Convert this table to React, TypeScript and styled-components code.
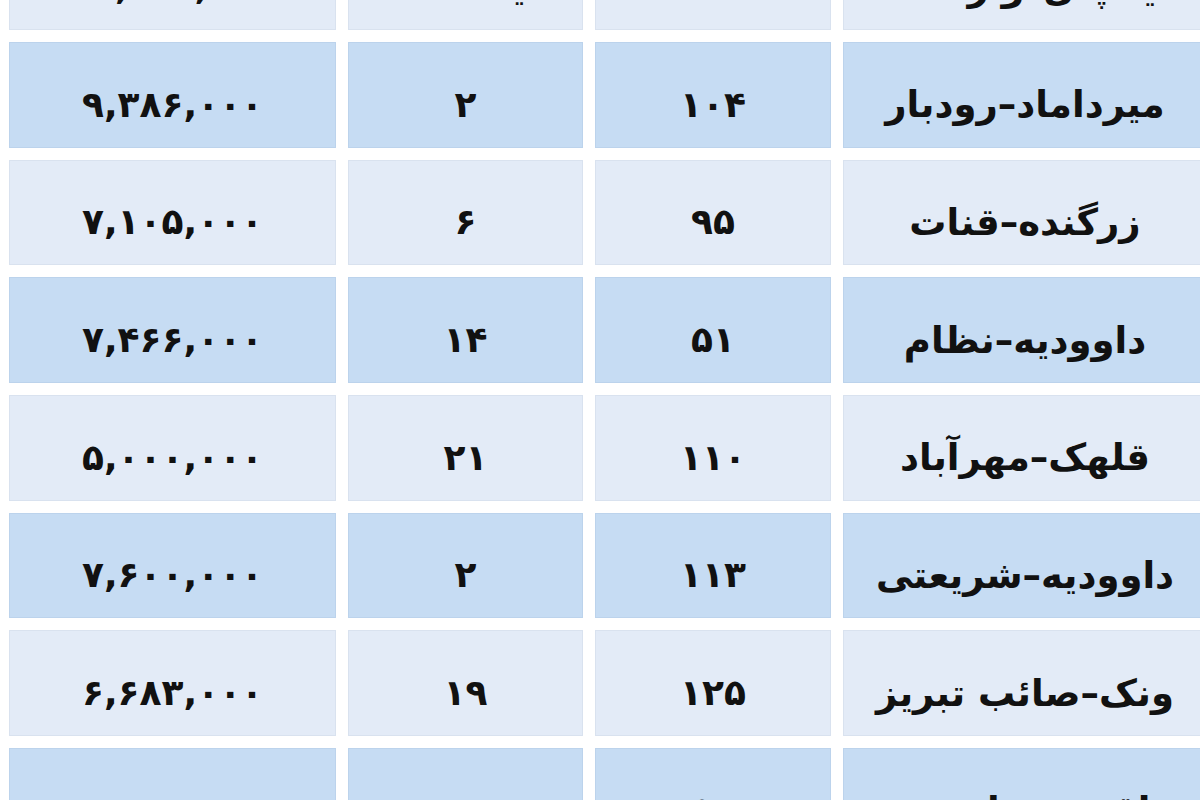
import React from "react";
import styled, { createGlobalStyle } from "styled-components";

const Global = createGlobalStyle`
  html, body {
    margin: 0;
    padding: 0;
    background: #ffffff;
    overflow: hidden;
    width: 1200px;
    height: 800px;
  }
  #root {
    width: 1200px;
    height: 800px;
    overflow: hidden;
  }
`;

const Viewport = styled.div`
  width: 1200px;
  height: 800px;
  overflow: hidden;
  background: #ffffff;
`;

const Table = styled.div`
  direction: rtl;
  display: grid;
  grid-template-columns: 364px 236px 235px 327px;
  grid-auto-rows: 105.67px;
  column-gap: 12px;
  row-gap: 12px;
  width: 1198px;
  margin-left: 9px;
  margin-top: -75.67px;
  font-family: "DejaVu Sans", "Noto Sans", sans-serif;
`;

const Cell = styled.div<{ $dark: boolean; $wide?: boolean }>`
  display: flex;
  align-items: center;
  justify-content: center;
  box-sizing: border-box;
  padding-top: 20px;
  background: ${(p) => (p.$dark ? "#c6dcf3" : "#e3ebf7")};
  border: 1px solid ${(p) => (p.$dark ? "#bcd3ec" : "#d9e2ef")};
  color: #111111;
  font-size: ${(p) => (p.$wide ? "37px" : "36px")};
  font-weight: 700;
  white-space: nowrap;
  line-height: 1;
`;

const Num = styled.span`
  direction: ltr;
  unicode-bidi: isolate;
  letter-spacing: 0.5px;
`;

type Row = [string, string, string, string];

const rows: Row[] = [
  ["یخچال–وارسته", "۱۲۷", "یکساله", "۱۰,۸۷۹,۰۰۰"],
  ["میرداماد–رودبار", "۱۰۴", "۲", "۹,۳۸۶,۰۰۰"],
  ["زرگنده–قنات", "۹۵", "۶", "۷,۱۰۵,۰۰۰"],
  ["داوودیه–نظام", "۵۱", "۱۴", "۷,۴۶۶,۰۰۰"],
  ["قلهک–مهرآباد", "۱۱۰", "۲۱", "۵,۰۰۰,۰۰۰"],
  ["داوودیه–شریعتی", "۱۱۳", "۲", "۷,۶۰۰,۰۰۰"],
  ["ونک–صائب تبریز", "۱۲۵", "۱۹", "۶,۶۸۳,۰۰۰"],
  ["اقدسیه–ارتش", "۵۳", "۱۰", "۸,۶۱۶,۰۰۰"],
];

export default function App() {
  return (
    <Viewport>
      <Global />
      <Table>
        {rows.map((r, i) => {
          const dark = i % 2 === 1;
          return (
            <React.Fragment key={i}>
              <Cell $dark={dark} $wide>{r[0]}</Cell>
              <Cell $dark={dark}><Num>{r[1]}</Num></Cell>
              <Cell $dark={dark}>{/^[۰-۹]+$/.test(r[2]) ? <Num>{r[2]}</Num> : r[2]}</Cell>
              <Cell $dark={dark}><Num>{r[3]}</Num></Cell>
            </React.Fragment>
          );
        })}
      </Table>
    </Viewport>
  );
}
